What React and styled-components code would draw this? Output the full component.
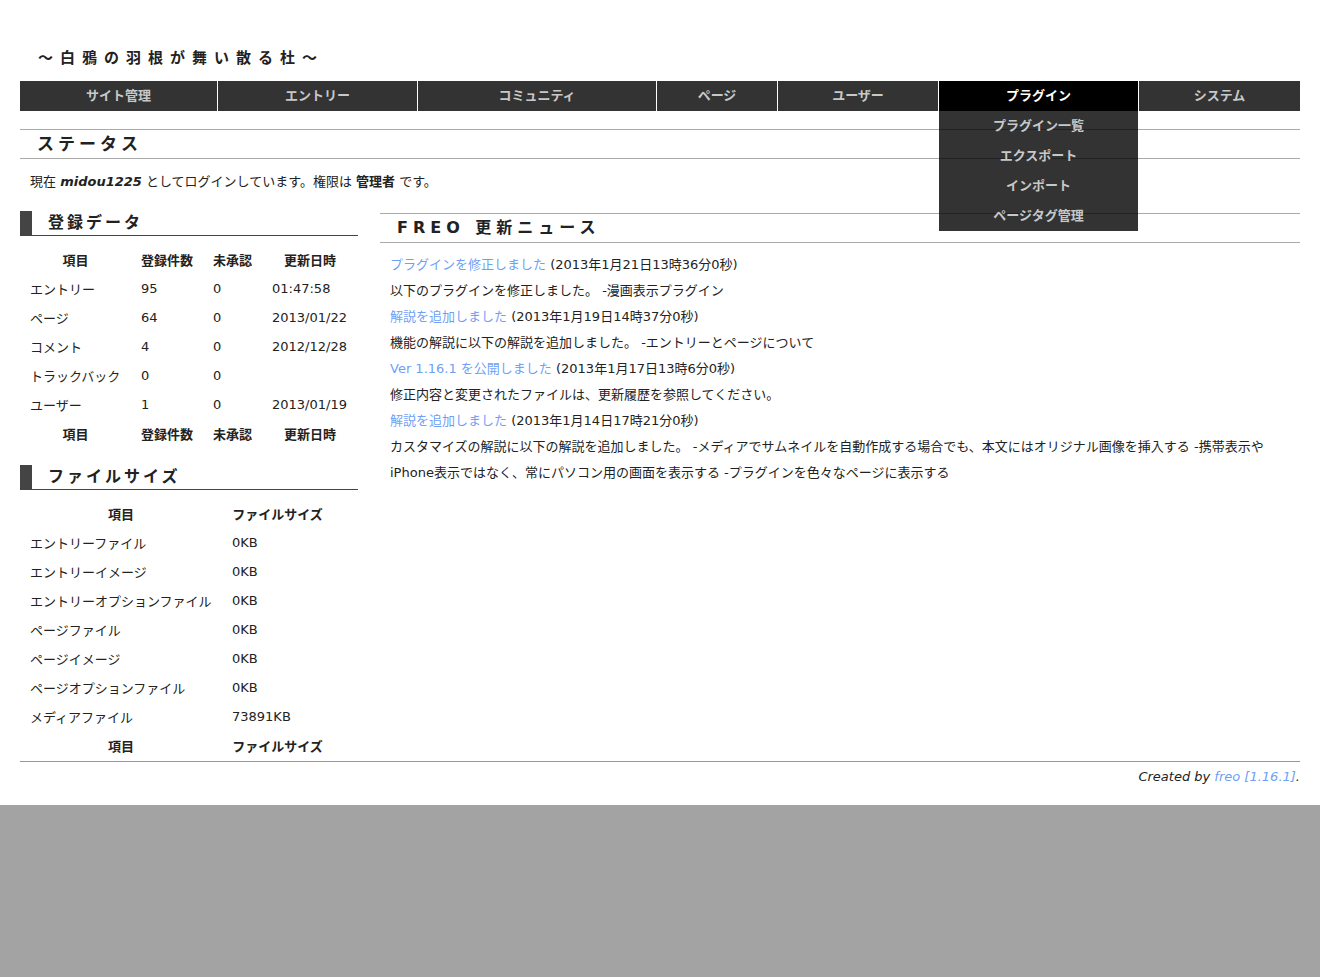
import styled, { createGlobalStyle } from 'styled-components';

const GlobalStyle = createGlobalStyle`
  html, body {
    margin: 0;
    padding: 0;
    background: #a3a3a3;
  }
  body {
    font-family: "DejaVu Sans", "Noto Sans CJK JP", sans-serif;
    font-size: 13px;
    color: #222;
  }
  * {
    box-sizing: border-box;
  }
`;

const Page = styled.div`
  background: #ffffff;
  padding: 47px 20px 0;
`;

const SiteTitle = styled.h1`
  margin: 0 0 12px 18px;
  font-size: 15px;
  line-height: 22px;
  font-weight: 700;
  letter-spacing: 7px;
  color: #222;
`;

const Nav = styled.ul`
  display: flex;
  margin: 0;
  padding: 0;
  list-style: none;
  background: #333;
  height: 30px;
`;

const NavItem = styled.li`
  position: relative;
  flex: 0 0 ${(p) => p.$w}px;
  border-right: 1px solid #ffffff;
  background: ${(p) => (p.$active ? '#000' : '#333')};
  color: ${(p) => (p.$active ? '#fff' : '#c8c8c8')};
  font-weight: 700;
  text-align: center;
  line-height: 30px;

  &:last-child {
    border-right: none;
  }
`;

const Dropdown = styled.ul`
  position: absolute;
  top: 100%;
  left: 0;
  width: 199px;
  margin: 0;
  padding: 0;
  list-style: none;
  background: rgba(0, 0, 0, 0.8);
  z-index: 5;
`;

const DropItem = styled.li`
  line-height: 30px;
  color: #c8c8c8;
  font-weight: 700;
  text-align: center;
`;

const StatusHeading = styled.h2`
  margin: 18px 0 0;
  padding-left: 17px;
  height: 30px;
  border-top: 1px solid #aaa;
  border-bottom: 1px solid #aaa;
  font-size: 17px;
  line-height: 28px;
  font-weight: 700;
  letter-spacing: 4px;
`;

const StatusText = styled.p`
  margin: 13px 0 0;
  padding-left: 10px;
  line-height: 20px;

  em {
    font-weight: 700;
  }
  strong {
    font-weight: 700;
  }
`;

const Columns = styled.div`
  display: flex;
  gap: 22px;
  margin-top: 19px;
`;

const LeftCol = styled.div`
  flex: 0 0 338px;
`;

const RightCol = styled.div`
  flex: 1;
  margin-top: 2px;
`;

const BoxHeading = styled.h3`
  margin: ${(p) => (p.$first ? '0' : '17px')} 0 0;
  height: 25px;
  padding-left: 16px;
  border-left: 12px solid #444;
  border-bottom: 1px solid #444;
  font-size: 16px;
  line-height: 24px;
  font-weight: 700;
  letter-spacing: 3px;
`;

const Table = styled.table`
  border-collapse: collapse;
  margin-top: 9px;
`;

const Th = styled.th`
  width: ${(p) => p.$w}px;
  height: 29px;
  padding: 0 10px;
  font-weight: 700;
  text-align: center;
  white-space: nowrap;
`;

const Td = styled.td`
  height: 29px;
  padding: 0 10px;
  text-align: left;
  white-space: nowrap;
`;

const NewsHeading = styled.h3`
  margin: 0;
  height: 30px;
  padding-left: 17px;
  border-top: 1px solid #aaa;
  border-bottom: 1px solid #aaa;
  font-size: 16px;
  line-height: 28px;
  font-weight: 700;
  letter-spacing: 5px;
`;

const NewsList = styled.div`
  margin-top: 9px;
  padding: 0 10px;
`;

const NewsLine = styled.p`
  margin: 0;
  line-height: 26px;
`;

const Link = styled.a`
  color: #6f9ff7;
  text-decoration: none;
`;

const Footer = styled.div`
  margin-top: 1px;
  border-top: 1px solid #999;
  padding: 6px 0 19px;
  text-align: right;
  font-style: italic;
  line-height: 18px;
`;

const navItems = [
  { label: 'サイト管理', w: 198 },
  { label: 'エントリー', w: 200 },
  { label: 'コミュニティ', w: 239 },
  { label: 'ページ', w: 121 },
  { label: 'ユーザー', w: 161 },
  { label: 'プラグイン', w: 200, active: true },
  { label: 'システム', w: 161 },
];

const pluginMenu = ['プラグイン一覧', 'エクスポート', 'インポート', 'ページタグ管理'];

const dataRows = [
  ['エントリー', '95', '0', '01:47:58'],
  ['ページ', '64', '0', '2013/01/22'],
  ['コメント', '4', '0', '2012/12/28'],
  ['トラックバック', '0', '0', ''],
  ['ユーザー', '1', '0', '2013/01/19'],
];

const fileRows = [
  ['エントリーファイル', '0KB'],
  ['エントリーイメージ', '0KB'],
  ['エントリーオプションファイル', '0KB'],
  ['ページファイル', '0KB'],
  ['ページイメージ', '0KB'],
  ['ページオプションファイル', '0KB'],
  ['メディアファイル', '73891KB'],
];

const news = [
  {
    title: 'プラグインを修正しました',
    date: '(2013年1月21日13時36分0秒)',
    body: '以下のプラグインを修正しました。 -漫画表示プラグイン',
  },
  {
    title: '解説を追加しました',
    date: '(2013年1月19日14時37分0秒)',
    body: '機能の解説に以下の解説を追加しました。 -エントリーとページについて',
  },
  {
    title: 'Ver 1.16.1 を公開しました',
    date: '(2013年1月17日13時6分0秒)',
    body: '修正内容と変更されたファイルは、更新履歴を参照してください。',
  },
  {
    title: '解説を追加しました',
    date: '(2013年1月14日17時21分0秒)',
    body:
      'カスタマイズの解説に以下の解説を追加しました。 -メディアでサムネイルを自動作成する場合でも、本文にはオリジナル画像を挿入する -携帯表示やiPhone表示ではなく、常にパソコン用の画面を表示する -プラグインを色々なページに表示する',
  },
];

function DataHead() {
  return (
    <tr>
      <Th $w={111}>項目</Th>
      <Th $w={72}>登録件数</Th>
      <Th $w={59}>未承認</Th>
      <Th $w={96}>更新日時</Th>
    </tr>
  );
}

function FileHead() {
  return (
    <tr>
      <Th $w={202}>項目</Th>
      <Th $w={111}>ファイルサイズ</Th>
    </tr>
  );
}

export default function App() {
  return (
    <>
      <GlobalStyle />
      <Page>
        <SiteTitle>～白鴉の羽根が舞い散る杜～</SiteTitle>

        <Nav>
          {navItems.map((item) => (
            <NavItem key={item.label} $w={item.w} $active={item.active}>
              {item.label}
              {item.active && (
                <Dropdown>
                  {pluginMenu.map((m) => (
                    <DropItem key={m}>{m}</DropItem>
                  ))}
                </Dropdown>
              )}
            </NavItem>
          ))}
        </Nav>

        <StatusHeading>ステータス</StatusHeading>
        <StatusText>
          現在 <em>midou1225</em> としてログインしています。権限は <strong>管理者</strong> です。
        </StatusText>

        <Columns>
          <LeftCol>
            <BoxHeading $first>登録データ</BoxHeading>
            <Table>
              <thead>
                <DataHead />
              </thead>
              <tbody>
                {dataRows.map((r) => (
                  <tr key={r[0]}>
                    {r.map((c, i) => (
                      <Td key={i}>{c}</Td>
                    ))}
                  </tr>
                ))}
              </tbody>
              <tfoot>
                <DataHead />
              </tfoot>
            </Table>

            <BoxHeading>ファイルサイズ</BoxHeading>
            <Table>
              <thead>
                <FileHead />
              </thead>
              <tbody>
                {fileRows.map((r) => (
                  <tr key={r[0]}>
                    <Td>{r[0]}</Td>
                    <Td>{r[1]}</Td>
                  </tr>
                ))}
              </tbody>
              <tfoot>
                <FileHead />
              </tfoot>
            </Table>
          </LeftCol>

          <RightCol>
            <NewsHeading>FREO 更新ニュース</NewsHeading>
            <NewsList>
              {news.map((n, i) => (
                <div key={i}>
                  <NewsLine>
                    <Link href="#">{n.title}</Link> {n.date}
                  </NewsLine>
                  <NewsLine>{n.body}</NewsLine>
                </div>
              ))}
            </NewsList>
          </RightCol>
        </Columns>

        <Footer>
          Created by <Link href="#">freo [1.16.1]</Link>.
        </Footer>
      </Page>
    </>
  );
}
